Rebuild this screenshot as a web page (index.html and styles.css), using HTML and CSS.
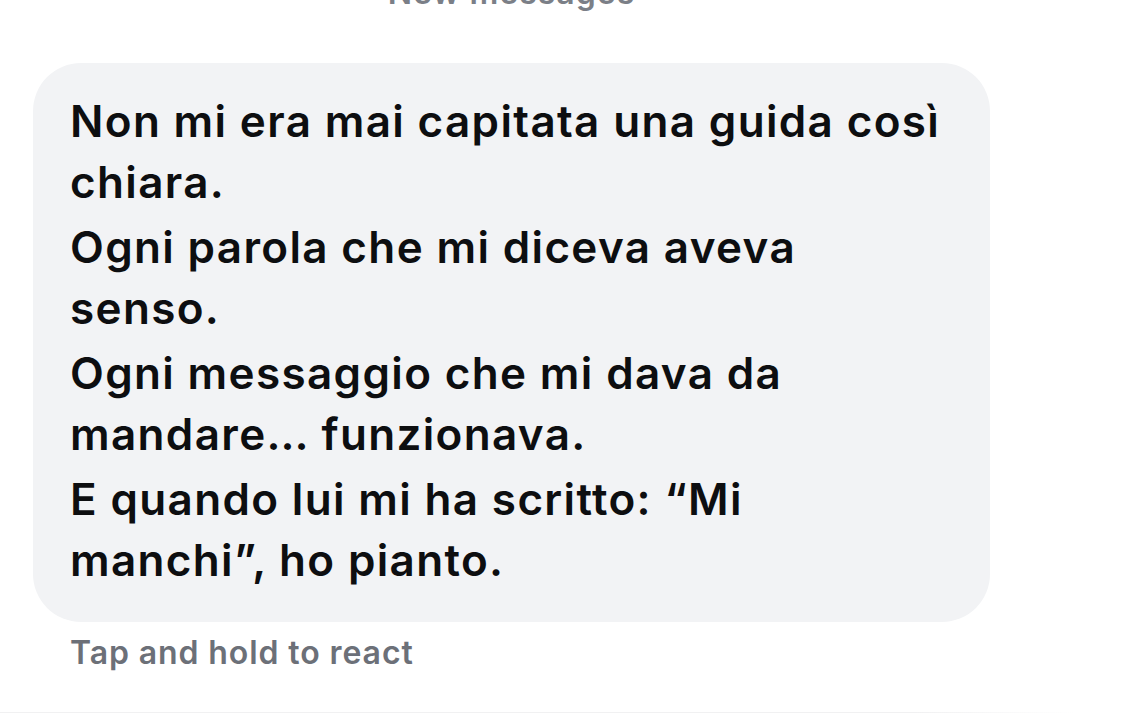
FILE: index.html
```html
<!DOCTYPE html>
<html lang="it">
<head>
<meta charset="utf-8">
<title>Chat</title>
<link rel="stylesheet" href="styles.css">
</head>
<body>
<div class="thread">
  <div class="column">
    <div class="new-label">New messages</div>
    <div class="bubble">
      <p>Non mi era mai capitata una guida così<br>chiara.</p>
      <p>Ogni parola che mi diceva aveva<br>senso.</p>
      <p>Ogni messaggio che mi dava da<br>mandare… funzionava.</p>
      <p>E quando lui mi ha scritto: “Mi<br>manchi”, ho pianto.</p>
    </div>
    <div class="hint">Tap and hold to react</div>
  </div>
  <div class="divider"></div>
</div>
</body>
</html>
```

FILE: styles.css
```css
html, body {
  margin: 0;
  padding: 0;
  background: #ffffff;
  height: 713px;
  overflow: hidden;
}
body {
  font-family: "Inter", "Roboto", "Liberation Sans", sans-serif;
  -webkit-font-smoothing: antialiased;
}
.thread {
  display: flex;
  flex-direction: column;
}
.column {
  width: 957px;
  margin-left: 33px;
  display: flex;
  flex-direction: column;
}
.new-label {
  text-align: center;
  font-size: 32px;
  font-weight: 600;
  letter-spacing: 1px;
  line-height: 36px;
  color: #7b7f87;
  margin-top: -25px;
  height: 36px;
}
.bubble {
  margin-top: 52px;
  background: #f2f3f5;
  border-radius: 48px;
  padding: 28px 20px 31px 37px;
  color: #0d0e10;
  font-size: 44px;
  font-weight: 600;
  letter-spacing: 1.35px;
  line-height: 61px;
}
.bubble p {
  margin: 0;
  white-space: nowrap;
}
.bubble p + p {
  margin-top: 4px;
}
.hint {
  margin-top: 13px;
  padding-left: 37px;
  font-size: 32px;
  font-weight: 600;
  letter-spacing: 0.9px;
  line-height: 36px;
  color: #6c7078;
}
.divider {
  margin-top: 41px;
  width: 1075px;
  height: 2px;
  background: linear-gradient(to right, #f1f1f2 0%, #f1f1f2 85%, rgba(241,241,242,0) 100%);
}
```
